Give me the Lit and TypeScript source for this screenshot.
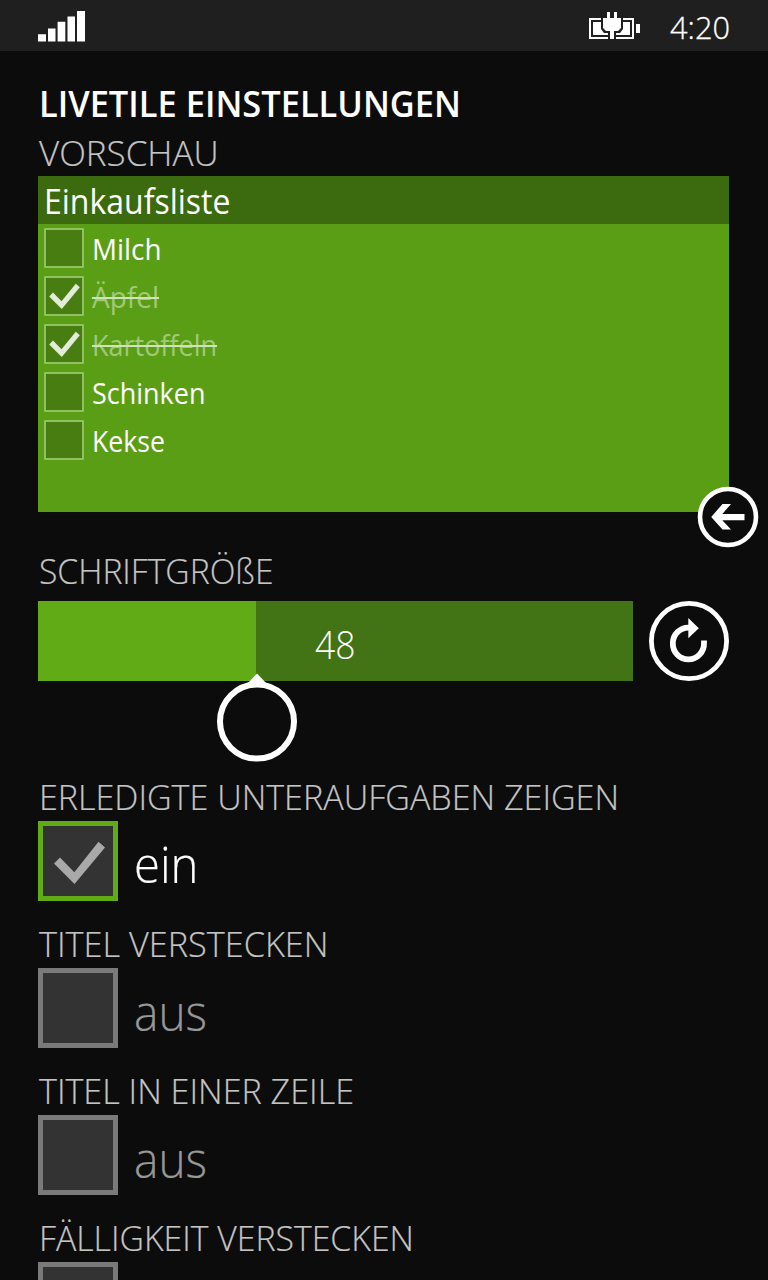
import { LitElement, html, css, svg } from "lit";
import { customElement, property } from "lit/decorators.js";

/** A single line of text condensed or widened to a given width. */
@customElement("fit-text")
class FitText extends LitElement {
  @property({ type: Number }) width = 0;
  @property({ type: Number }) scale = 1;

  static styles = css`
    :host { display: block; white-space: pre; }
    .line { display: inline-block; transform-origin: 0 50%; }
  `;

  firstUpdated() {
    const line = this.renderRoot.querySelector(".line") as HTMLElement;
    const natural = line.getBoundingClientRect().width;
    if (natural && this.width) this.scale = this.width / natural;
    this.style.width = `${this.width}px`;
  }

  render() {
    return html`<span class="line" style="transform:scaleX(${this.scale})"><slot></slot></span>`;
  }
}

@customElement("app-root")
class AppRoot extends LitElement {
  private items = [
    { name: "Milch", width: 69.5, done: false },
    { name: "Äpfel", width: 67, done: true },
    { name: "Kartoffeln", width: 125, done: true },
    { name: "Schinken", width: 113.5, done: false },
    { name: "Kekse", width: 73, done: false },
  ];

  private toggles = [
    { title: "ERLEDIGTE UNTERAUFGABEN ZEIGEN", width: 580, on: true, state: "ein" },
    { title: "TITEL VERSTECKEN", width: 289.5, on: false, state: "aus" },
    { title: "TITEL IN EINER ZEILE", width: 315, on: false, state: "aus" },
    { title: "FÄLLIGKEIT VERSTECKEN", width: 375, on: false, state: "" },
  ];

  static styles = css`
    :host {
      display: block;
      width: 768px;
      height: 1280px;
      overflow: hidden;
      background: #0c0c0c;
      color: #fff;
      font-family: "Open Sans", "Noto Sans", sans-serif;
    }
    * { box-sizing: border-box; }
    svg { display: block; }
    .status {
      display: flex;
      justify-content: space-between;
      height: 51px;
      padding: 0 38px 0 38px;
      background: #1f1f1f;
    }
    .signal { margin-top: 10px; }
    .right { display: flex; gap: 29px; }
    .battery { margin-top: 12px; }
    .clock { font-size: 31.5px; line-height: 54px; font-weight: 300; -webkit-text-stroke: 0.3px #fff; }
    main { padding: 27px 38px 0; }
    .title { font-size: 35.5px; font-weight: 600; line-height: 50px; height: 48px; padding-left: 0.5px; }
    .label {
      font-size: 35.5px;
      font-weight: 300;
      line-height: 53px;
      height: 50px;
      padding-left: 0.7px;
      color: #c4c4c4;
      -webkit-text-stroke: 0.2px #c4c4c4;
    }
    .card { position: relative; width: 691.3px; height: 336px; background: #5a9e15; }
    .card-head { height: 47.7px; padding-left: 6px; background: #3c6a0e; font-size: 34.5px; line-height: 49px; }
    .item { display: flex; height: 48px; align-items: center; padding-left: 6.3px; }
    .box {
      width: 40px;
      height: 40px;
      border: 2px solid #91bf63;
      background: #487e11;
    }
    .item-text { position: relative; margin-left: 8.2px; font-size: 28.5px; line-height: 50px; height: 48px; }
    .done { color: #a1c879; }
    .done::after {
      content: "";
      position: absolute;
      left: 0;
      right: 0;
      top: 25.5px;
      height: 2px;
      background: #cfe3bb;
    }
    .back { position: absolute; left: 659px; top: 310px; }
    .size { margin-top: 32px; }
    .slider-row { display: flex; gap: 16px; margin-top: 7.3px; height: 168.7px; }
    .slider { position: relative; display: flex; justify-content: center; width: 595.3px; height: 80px; background: #427314; }
    .fill { position: absolute; left: 0; top: 0; bottom: 0; width: 36.7%; background: #61ab17; }
    .value { position: relative; font-size: 38px; font-weight: 300; line-height: 86px; }
    .thumb { position: absolute; left: 178.5px; top: 72px; }
    .group { height: 147px; }
    .toggle { display: flex; gap: 16px; margin-top: 0.7px; }
    .check {
      width: 80px;
      height: 80px;
      border: 5px solid #7a7a7a;
      background: #333;
    }
    .check.on { border-color: #61ab17; }
    .state { font-size: 50px; font-weight: 300; line-height: 88px; height: 80px; color: #989898; -webkit-text-stroke: 0.2px #989898; }
    .state.on { color: #fff; line-height: 86px; -webkit-text-stroke-color: #fff; }
  `;

  private tick(color: string) {
    return svg`<path d="M11 37.5 L17 31.5 L31.3 46.3 L55.5 15.8 L62 21.5 L31.5 58 Z" fill=${color}></path>`;
  }

  render() {
    return html`
      <div class="status">
        <svg class="signal" width="48" height="32" fill="#fff">
          <path d="M0 24.3h8v7.2H0zM10 18.4h7.5v13.1H10zM19.6 11.7h7.7v19.8h-7.7zM29.5 6.6h7.5v24.9h-7.5zM39 1h8v30.5h-8z"></path>
        </svg>
        <div class="right">
          <svg class="battery" width="52" height="28" fill="#fdfdfd">
            <path d="M0 6H12V8H2V25H19V27H0ZM34 6H45V27H27V25H43V8H34ZM4 10H41V23H4ZM47 12H51V21H47Z"></path>
            <path d="M12 4H34V17L31 21H27V28H19V21H15L12 17Z" fill="#1f1f1f"></path>
            <path d="M18 0H21V6H25V0H28V6H32V16L29 19H25V27H21V19H17L14 16V6H18Z"></path>
          </svg>
          <fit-text class="clock" width="60">4:20</fit-text>
        </div>
      </div>
      <main>
        <fit-text class="title" width="422">LIVETILE EINSTELLUNGEN</fit-text>
        <fit-text class="label" width="179.5">VORSCHAU</fit-text>
        <section class="card">
          <div class="card-head"><fit-text width="186.5">Einkaufsliste</fit-text></div>
          ${this.items.map(
            (item) => html`
              <div class="item">
                <div class="box">
                  ${item.done
                    ? html`<svg width="36" height="36" viewBox="0 0 36 36">
                        <path d="M3.2 18.6 L7 14.6 L15.5 23.3 L29.8 5.8 L33.8 9.3 L15.8 31 Z" fill="#e3ebda"></path>
                      </svg>`
                    : ""}
                </div>
                <fit-text class="item-text ${item.done ? "done" : ""}" width=${item.width}>${item.name}</fit-text>
              </div>
            `
          )}
          <svg class="back" width="62" height="62" viewBox="0 0 62 62">
            <circle cx="31" cy="31" r="28" fill="#0c0c0c" stroke="#fff" stroke-width="4.6"></circle>
            <path d="M14.2 31 L25.5 18 H34 L25.3 28 H47.5 V34.2 H25.3 L34 43.5 H25.5 Z" fill="#fff"></path>
          </svg>
        </section>
        <fit-text class="label size" width="234.5">SCHRIFTGRÖßE</fit-text>
        <div class="slider-row">
          <div class="slider">
            <div class="fill"></div>
            <fit-text class="value" width="40.5">48</fit-text>
            <svg class="thumb" width="80" height="90" viewBox="0 0 80 90">
              <path d="M30 11 L40 0.5 L50 11 Z" fill="#fff"></path>
              <circle cx="40" cy="48.6" r="37" fill="#0c0c0c" stroke="#fff" stroke-width="6"></circle>
            </svg>
          </div>
          <svg class="reset" width="80" height="80" viewBox="0 0 80 80">
            <circle cx="40" cy="40" r="37.6" fill="none" stroke="#fff" stroke-width="4.8"></circle>
            <path d="M55 39.5 V42 A15.6 15.9 0 1 1 40 26.6" fill="none" stroke="#fff" stroke-width="5.8"></path>
            <path d="M39.3 17 L49.8 27.2 L39.3 37.2 Z" fill="#fff"></path>
          </svg>
        </div>
        ${this.toggles.map(
          (t) => html`
            <div class="group">
              <fit-text class="label" width=${t.width}>${t.title}</fit-text>
              <div class="toggle">
                <div class="check ${t.on ? "on" : ""}">
                  ${t.on ? html`<svg width="70" height="70" viewBox="0 0 70 70">${this.tick("#a9a9a9")}</svg>` : ""}
                </div>
                ${t.state
                  ? html`<fit-text class="state ${t.on ? "on" : ""}" width=${t.on ? 64.5 : 73}>${t.state}</fit-text>`
                  : ""}
              </div>
            </div>
          `
        )}
      </main>
    `;
  }
}
